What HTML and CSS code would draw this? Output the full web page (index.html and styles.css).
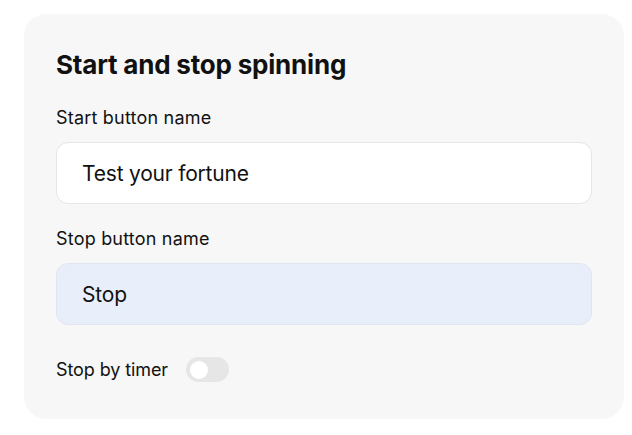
FILE: index.html
```html
<!DOCTYPE html>
<html lang="en">
<head>
  <meta charset="UTF-8">
  <title>Spin settings</title>
  <link rel="stylesheet" href="styles.css">
</head>
<body>

  <div class="card">
    <h2>Start and stop spinning</h2>

    <label class="feld-label" for="start-name">Start button name</label>
    <input type="text" id="start-name" class="feld" value="Test your fortune">

    <label class="feld-label" for="stop-name">Stop button name</label>
    <input type="text" id="stop-name" class="feld feld-aktiv" value="Stop">

    <div class="timer-row">
      <span>Stop by timer</span>
      <button class="toggle" onclick="this.classList.toggle('on')"><span class="knob"></span></button>
    </div>
  </div>

</body>
</html>
```

FILE: styles.css
```css
body {
  font-family: Inter, 'Noto Sans', sans-serif;
  background: #ffffff;
  margin: 0;
  padding: 14px 8px 0 24px;
  color: #111;
}

.card {
  width: 600px;
  box-sizing: border-box;
  background: #f7f7f7;
  border-radius: 22px;
  padding: 35px 32px 37px;
}

.card h2 {
  margin: 0 0 26px;
  font-size: 26px;
  font-weight: 700;
  letter-spacing: -0.2px;
  line-height: 32px;
}

.feld-label {
  display: block;
  font-size: 18px;
  letter-spacing: 0.2px;
  line-height: 22px;
  margin-bottom: 13px;
}

.feld {
  display: block;
  width: 100%;
  box-sizing: border-box;
  height: 62px;
  padding: 0 25px;
  margin-bottom: 24px;
  font-family: inherit;
  font-size: 21px;
  letter-spacing: -0.2px;
  color: #111;
  background: #fff;
  border: 1px solid #e6e6e6;
  border-radius: 12px;
  outline: none;
}

.feld-aktiv {
  background: #e8effb;
  border-color: #dfe6f2;
}

.timer-row {
  display: flex;
  align-items: center;
  gap: 18px;
  font-size: 18px;
  letter-spacing: -0.1px;
  margin-top: 32px;
}

.toggle {
  position: relative;
  width: 43px;
  height: 25px;
  padding: 0;
  border: none;
  border-radius: 13px;
  background: #e6e6e6;
  cursor: pointer;
}

.knob {
  position: absolute;
  left: 4px;
  top: 3.5px;
  width: 18px;
  height: 18px;
  border-radius: 50%;
  background: #fff;
  transition: left 0.2s;
}

.toggle.on {
  background: #3b82f6;
}

.toggle.on .knob {
  left: 21px;
}
```
